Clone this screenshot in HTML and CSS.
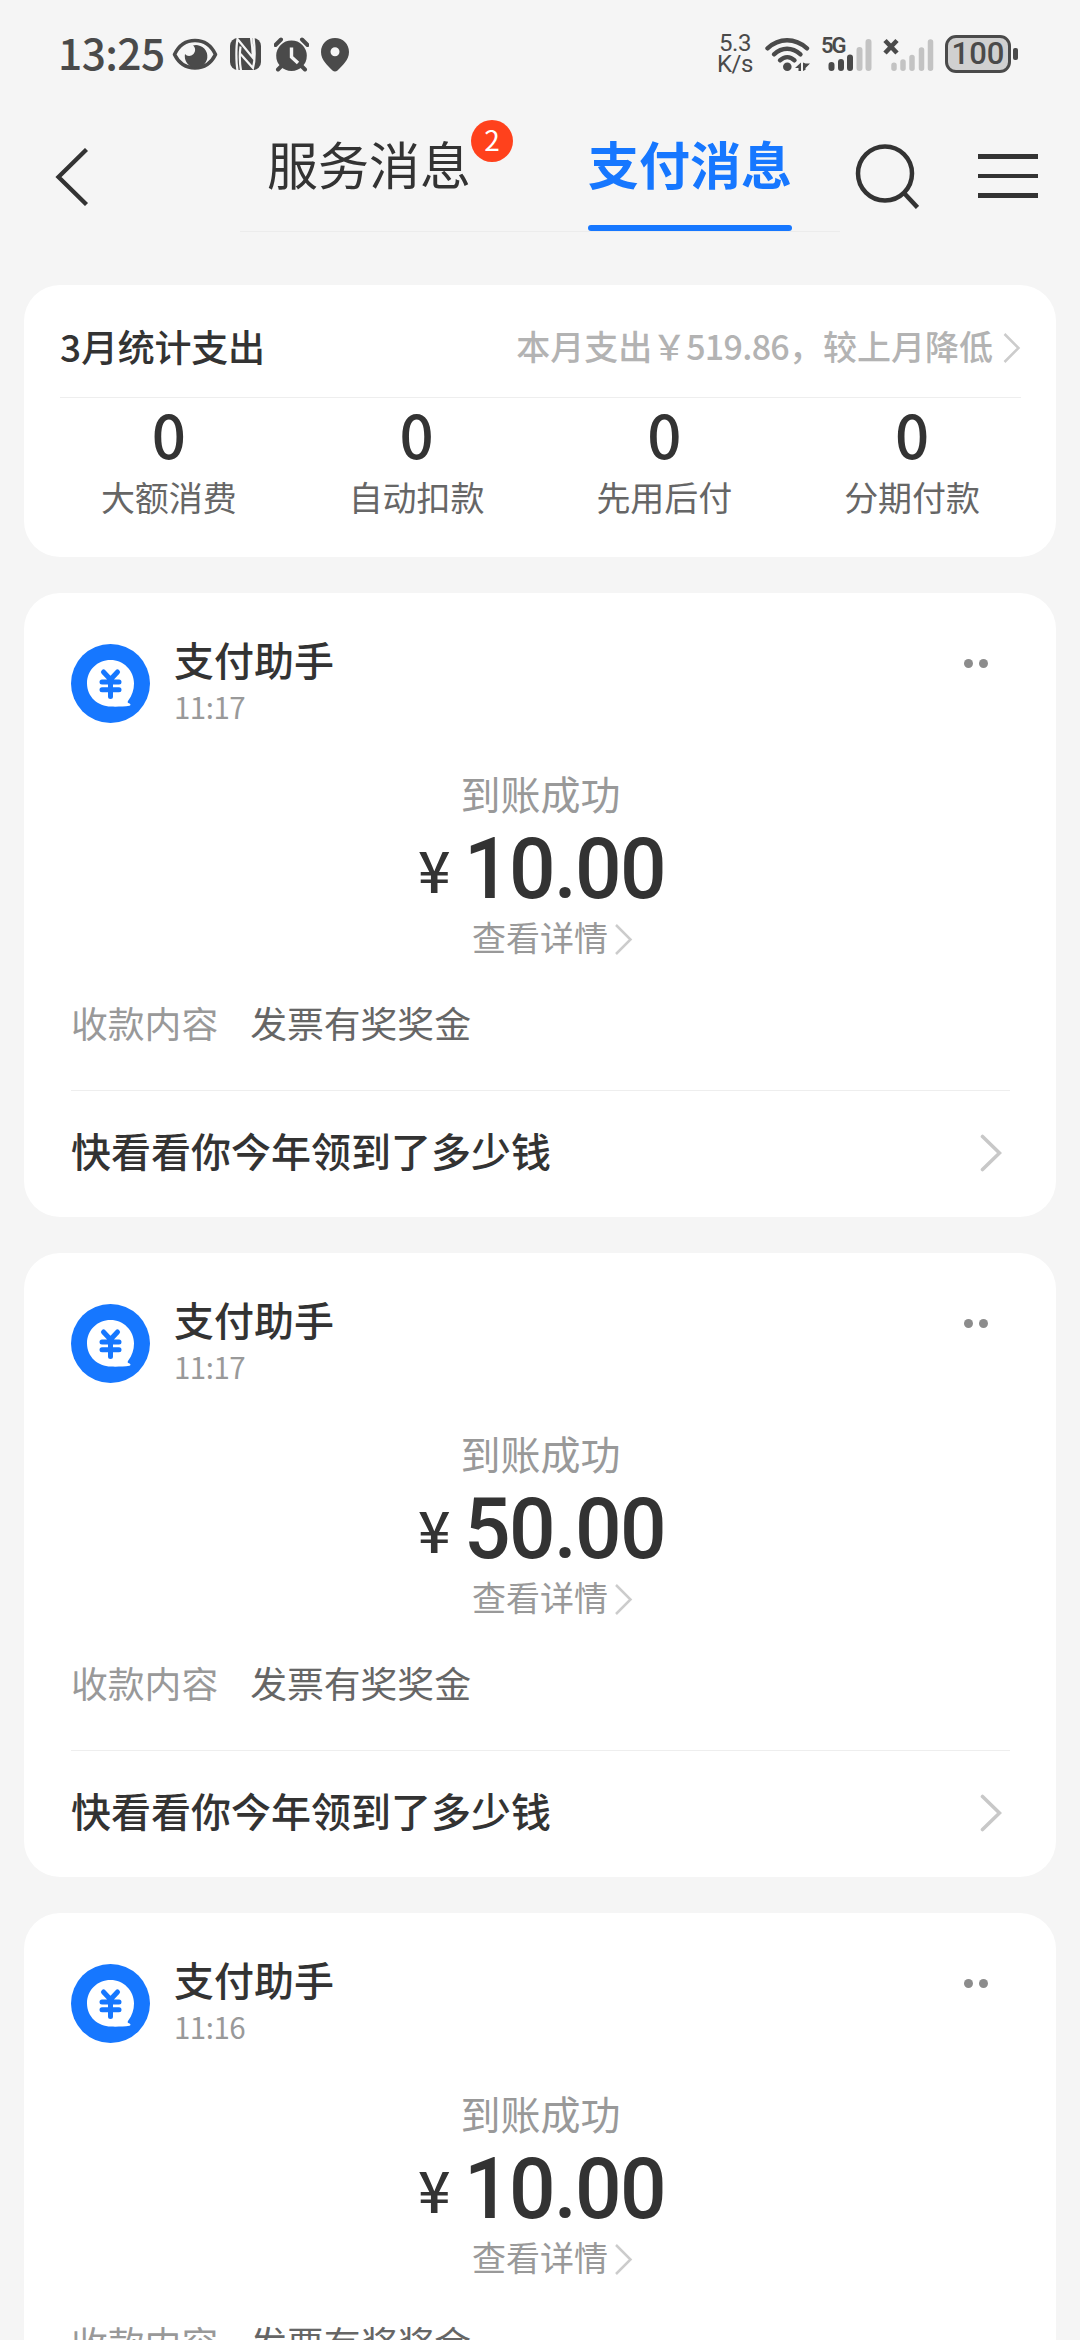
FILE: index.html
```html
<!DOCTYPE html>
<html lang="zh-CN">
<head>
<meta charset="utf-8">
<title>支付消息</title>
<link rel="stylesheet" href="styles.css">
</head>
<body>
<svg class="defs" width="0" height="0">
  <symbol id="avatar" viewBox="0 0 79 79">
    <circle cx="39.5" cy="39.5" r="39.5" fill="#1677ff"/>
    <path d="M39.5 16C26.500 16 16 26 16 39.300C16 53 27 62.500 40 62.600C47 62.700 53 62.600 58.500 61.800C60 61.400 59.700 60 58.500 59.600C56.500 59 56.200 58 57.300 56.500C61 51.500 63 46 63 39.500C63 26.500 52.500 16 39.500 16Z" fill="#fff"/>
    <path d="M32.500 28l7 7.500l7-7.500M31 38h17M31 45.700h17M39.500 35.500v17" fill="none" stroke="#1677ff" stroke-width="5" stroke-linecap="round" stroke-linejoin="round"/>
  </symbol>
</svg>
<div class="screen">
  <div class="status">
    <div class="status-left">
      <span class="clock">13:25</span>
      <svg class="eye" width="46" height="34" viewBox="0 0 46 34"><path d="M2.500 17.500C7 8 14 3.500 23 3.500S39 8 43.500 17.500C39 26.500 32 31 23 31S7 26.500 2.500 17.500Z" fill="none" stroke="#4a4a4a" stroke-width="3.600" stroke-linejoin="round"/><path d="M21 8.500A11.300 11.300 0 1 1 13 17C15 19.500 19 19.500 21.500 17C24 14 23.500 10.500 21 8.500Z" fill="#4a4a4a"/></svg>
      <svg class="nfc" width="31" height="34" viewBox="0 0 31 34"><path d="M8 1h15a8 8 0 0 1 8 8v16a8 8 0 0 1-8 8H8a8 8 0 0 1-8-8V9a8 8 0 0 1 8-8Z" fill="#4a4a4a"/><path d="M7.500 33.500C6 25 6 10 7.500 2L23 21C22.500 12 22 7 21 .5M10.500 9.500C9.500 17 9.500 25 11 33.500M10.500 17L23 31C25 24 25 12 23.500.5" fill="none" stroke="#f5f5f5" stroke-width="2.200"/></svg>
      <svg class="alarm" width="35" height="35" viewBox="0 0 35 35"><circle cx="17.500" cy="18.800" r="15.300" fill="#4a4a4a"/><path d="M1.500 8L7 2.500M28 2.500L33.500 8M7 29.500L4 32.500M28 29.500l3 3" stroke="#4a4a4a" stroke-width="4" stroke-linecap="round"/><path d="M17.500 10.500v9.500l6.500 6" fill="none" stroke="#f5f5f5" stroke-width="3.400"/></svg>
      <svg class="pin" width="28" height="35" viewBox="0 0 28 35"><path fill-rule="evenodd" d="M14 1C6 1 0 7 0 15C0 23 7 29 11.500 33.500Q14 35.500 16.500 33.500C21 29 28 23 28 15C28 7 22 1 14 1ZM14 10.300a4.500 4.500 0 1 1 0 9a4.500 4.500 0 0 1 0-9Z" fill="#4a4a4a"/></svg>
    </div>
    <div class="status-right">
      <div class="speed"><span>5.3</span><span>K/s</span></div>
      <svg class="wifi" width="45" height="36" viewBox="0 0 45 36"><g fill="none" stroke="#4a4a4a" stroke-width="4.400" stroke-linecap="round"><path d="M2.500 12.300C14 1.500 30 1.500 42 12.300"/><path d="M9 18.300C17 10.800 27 10.800 35.500 18.300"/><path d="M15 24.300C19.500 20 25 20 29.500 24.300"/></g><circle cx="22.300" cy="30.800" r="4.300" fill="#4a4a4a"/><path d="M36 26.500v8.500h-2.500v-3h-3.500ZM38 26.500v8.500l2.500-1.200V32l4.500-4.500h-4.500Z" fill="#4a4a4a"/></svg>
      <div class="signal sim1"><span class="net">5G</span><svg width="50" height="36" viewBox="0 0 50 36" stroke-width="6" stroke-linecap="round"><path d="M9.500 29v3M19 26v6M28 21.500V32" stroke="#4a4a4a"/><path d="M37.500 14v18M46.500 6v26" stroke="#c3c3c3"/></svg></div>
      <svg class="sim2" width="50" height="36" viewBox="0 0 50 36" stroke-width="5.500" stroke-linecap="round"><path d="M13 29.300v3M22 26v6.300M31 21.500v10.800M40.500 14v18.300M49.500 6v26.300" stroke="#c3c3c3"/><path d="M4 4.500L16 17M16 4.500L4 17" stroke="#4a4a4a" stroke-width="4.600" stroke-linecap="butt"/></svg>
      <div class="battery">100</div><i class="nub"></i>
    </div>
  </div>

  <div class="nav">
    <svg class="back" width="34" height="58" viewBox="0 0 34 58"><path d="M31.500 1.500L3.500 29L31.500 56.500" fill="none" stroke="#333" stroke-width="4.300"/></svg>
    <div class="tabs">
      <div class="tab">服务消息<b class="badge">2</b></div>
      <div class="tab active">支付消息</div>
    </div>
    <svg class="search" width="64" height="66" viewBox="0 0 64 66"><circle cx="30" cy="30.500" r="27" fill="none" stroke="#333" stroke-width="4.500"/><path d="M49 50L62.500 64.500" stroke="#333" stroke-width="4.500"/></svg>
    <div class="menu"><i></i><i></i><i></i></div>
  </div>

  <div class="card summary">
    <div class="summary-head">
      <span class="month">3月统计支出</span>
      <span class="spend">本月支出￥<span class="sum">519.86</span>，较上月降低</span>
      <svg width="18" height="32" viewBox="0 0 18 32"><path d="M1.500 2L15.500 16L1.500 30" fill="none" stroke="#ccc" stroke-width="2.500"/></svg>
    </div>
    <div class="stats">
      <div><b>0</b><span>大额消费</span></div>
      <div><b>0</b><span>自动扣款</span></div>
      <div><b>0</b><span>先用后付</span></div>
      <div><b>0</b><span>分期付款</span></div>
    </div>
  </div>

  <div class="card message">
    <div class="head">
      <svg class="avatar"><use href="#avatar"/></svg>
      <div class="who"><span class="name">支付助手</span><span class="time">11:17</span></div>
      <div class="dots"><i></i><i></i></div>
    </div>
    <div class="result">到账成功</div>
    <div class="amount"><span class="yen">¥</span><span class="num">10.00</span></div>
    <div class="detail">查看详情<svg width="19" height="32" viewBox="0 0 19 32"><path d="M2 2L16.500 16.500L2 31" fill="none" stroke="#ccc" stroke-width="2.500"/></svg></div>
    <div class="content"><span>收款内容</span><span class="value">发票有奖奖金</span></div>
    <div class="foot">快看看你今年领到了多少钱<svg width="22" height="38" viewBox="0 0 22 38"><path d="M2.500 2.500L19.500 19L2.500 35.500" fill="none" stroke="#c8c8c8" stroke-width="3.600" stroke-linecap="round"/></svg></div>
  </div>

  <div class="card message">
    <div class="head">
      <svg class="avatar"><use href="#avatar"/></svg>
      <div class="who"><span class="name">支付助手</span><span class="time">11:17</span></div>
      <div class="dots"><i></i><i></i></div>
    </div>
    <div class="result">到账成功</div>
    <div class="amount"><span class="yen">¥</span><span class="num">50.00</span></div>
    <div class="detail">查看详情<svg width="19" height="32" viewBox="0 0 19 32"><path d="M2 2L16.500 16.500L2 31" fill="none" stroke="#ccc" stroke-width="2.500"/></svg></div>
    <div class="content"><span>收款内容</span><span class="value">发票有奖奖金</span></div>
    <div class="foot">快看看你今年领到了多少钱<svg width="22" height="38" viewBox="0 0 22 38"><path d="M2.500 2.500L19.500 19L2.500 35.500" fill="none" stroke="#c8c8c8" stroke-width="3.600" stroke-linecap="round"/></svg></div>
  </div>

  <div class="card message">
    <div class="head">
      <svg class="avatar"><use href="#avatar"/></svg>
      <div class="who"><span class="name">支付助手</span><span class="time">11:16</span></div>
      <div class="dots"><i></i><i></i></div>
    </div>
    <div class="result">到账成功</div>
    <div class="amount"><span class="yen">¥</span><span class="num">10.00</span></div>
    <div class="detail">查看详情<svg width="19" height="32" viewBox="0 0 19 32"><path d="M2 2L16.500 16.500L2 31" fill="none" stroke="#ccc" stroke-width="2.500"/></svg></div>
    <div class="content"><span>收款内容</span><span class="value">发票有奖奖金</span></div>
  </div>
</div>
</body>
</html>
```
FILE: styles.css
```css
* { box-sizing: border-box; }
body {
  margin: 0;
  background: #f5f5f5;
  color: #333;
  font-family: "Noto Sans CJK SC", sans-serif;
}
svg { display: block; flex: none; }
i { display: block; }
.defs { position: absolute; }
.screen {
  width: 1080px;
  height: 2340px;
  overflow: hidden;
  display: flex;
  flex-direction: column;
}

/* status bar */
.status {
  flex: none;
  height: 108px;
  padding: 0 62px 0 58px;
  display: flex;
  justify-content: space-between;
  color: #4a4a4a;
}
.status-left, .status-right { display: flex; align-items: center; }
.clock {
  width: 105px;
  margin: -4px 9px 0 0;
  font-size: 42.500px;
  font-weight: 500;
  line-height: 60px;
  letter-spacing: -.6px;
  white-space: nowrap;
}
.nfc { margin-left: 12px; }
.alarm { margin-left: 13px; }
.pin { margin-left: 12px; }
.speed {
  width: 36px;
  margin-right: 12px;
  display: flex;
  flex-direction: column;
  align-items: center;
  font: 24px/21px Roboto, sans-serif;
  letter-spacing: -.5px;
}
.signal { position: relative; width: 50px; margin-left: 12px; }
.net {
  position: absolute;
  left: -1px;
  top: -1px;
  font: 600 22px/22px Roboto, sans-serif;
  letter-spacing: -2px;
}
.sim2 { margin-left: 9px; overflow: visible; }
.battery {
  width: 66px;
  height: 38px;
  margin-left: 14px;
  border: 3.500px solid #4a4a4a;
  border-radius: 11px;
  background: #d0d0d0;
  text-align: center;
  font: 500 31px/32px Roboto, sans-serif;
}
.nub { width: 5px; height: 12px; margin-left: 2px; border-radius: 2px; background: #4a4a4a; }

/* navigation */
.nav { flex: none; height: 177px; padding-left: 55px; display: flex; align-items: flex-start; }
.back { margin-top: 40px; }
.tabs {
  width: 600px;
  height: 124px;
  margin-left: 151px;
  border-bottom: 1px solid #ececec;
  padding: 0 48px 0 27px;
  display: flex;
  justify-content: space-between;
}
.tab {
  position: relative;
  width: 204px;
  height: 123px;
  padding-top: 21px;
  font-size: 51px;
  line-height: 69px;
  white-space: nowrap;
}
.tab.active {
  color: #1677ff;
  font-weight: 700;
}
.tab.active::after {
  content: "";
  display: block;
  height: 6px;
  margin-top: 27px;
  border-radius: 3px;
  background: #1677ff;
}
.badge {
  position: absolute;
  left: 204px;
  top: 12px;
  width: 42px;
  height: 42px;
  border-radius: 50%;
  background: #ff411c;
  color: #fff;
  text-align: center;
  font-size: 28px;
  font-weight: 400;
  line-height: 39px;
}
.search { margin: 35px 0 0 15px; }
.menu { width: 60px; margin: 46px 0 0 59px; display: grid; gap: 15px; }
.menu i { height: 4.500px; background: #333; }

/* cards */
.card {
  flex: none;
  margin: 0 24px 36px;
  border-radius: 36px;
  background: #fff;
}
.summary { height: 272px; }
.summary-head {
  height: 113px;
  margin: 0 35px 0 36px;
  padding-top: 9px;
  border-bottom: 1px solid #eee;
  display: flex;
  align-items: center;
  white-space: nowrap;
}
.month { font-size: 37px; font-weight: 500; letter-spacing: -.2px; }
.spend { margin-left: auto; font-size: 34px; font-weight: 500; color: #b3b3b3; }
.sum { letter-spacing: -.7px; }
.summary-head svg { margin: 5px 0 0 10px; }
.stats { margin: 5px 20px 0 21px; display: grid; grid-template-columns: repeat(4, 1fr); }
.stats div { display: flex; flex-direction: column; align-items: center; gap: 14px; }
.stats b { font-size: 60px; font-weight: 500; line-height: 60px; }
.stats span { font-size: 34px; line-height: 40px; color: #666; }

.message { height: 624px; padding: 41px 46px 0 47px; }
.head { height: 134px; display: flex; align-items: flex-start; }
.avatar { width: 79px; height: 79px; margin-top: 10px; }
.who { margin-left: 24px; display: flex; flex-direction: column; gap: 4px; }
.name { font-size: 40px; font-weight: 500; line-height: 50px; }
.time { font-size: 29.500px; line-height: 36px; color: #999; letter-spacing: -.5px; }
.dots { margin: 25px 22px 0 auto; display: flex; gap: 6px; }
.dots i { width: 9px; height: 9px; border-radius: 50%; background: #8c8c8c; }
.result { font-size: 40px; line-height: 50px; color: #999; text-align: center; }
.amount {
  height: 90px;
  margin-top: 6px;
  padding-left: 347px;
  display: flex;
  white-space: nowrap;
}
.yen { width: 46px; font-size: 57px; font-weight: 500; line-height: 88px; }
.num {
  font: 500 85px/90px Roboto, sans-serif;
  letter-spacing: -1.700px;
  transform: scaleX(.965);
  transform-origin: left;
}
.detail {
  margin-top: 3px;
  padding-left: 401px;
  display: flex;
  align-items: center;
  gap: 6px;
  font-size: 34px;
  line-height: 40px;
  color: #999;
}
.detail svg { margin-top: 4px; }
.content {
  height: 93px;
  margin-top: 40px;
  display: flex;
  gap: 32px;
  font-size: 36.800px;
  line-height: 50px;
  color: #999;
}
.value { color: #666; }
.foot {
  height: 127px;
  padding: 0 8px 8px 0;
  border-top: 1px solid #eee;
  display: flex;
  align-items: center;
  justify-content: space-between;
  font-size: 40px;
  font-weight: 500;
}
.foot svg { margin-top: 5px; }
```
